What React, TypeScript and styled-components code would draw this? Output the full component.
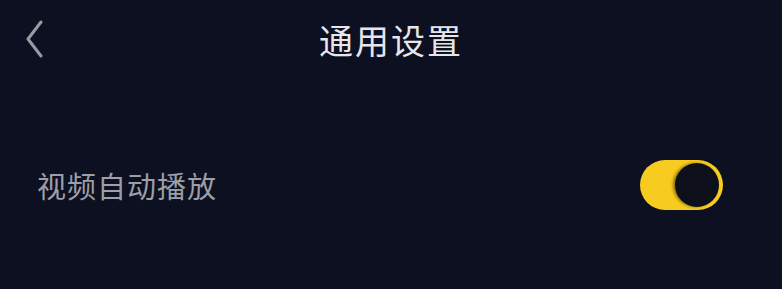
import styled, { createGlobalStyle } from "styled-components";

const GlobalStyle = createGlobalStyle`
  html, body {
    margin: 0;
    padding: 0;
    background: #0d1020;
  }
  body {
    font-family: "Noto Sans CJK SC", "Noto Sans", sans-serif;
  }
`;

const Page = styled.div`
  width: 782px;
  height: 289px;
  background: #0d1020;
  overflow: hidden;
`;

const Header = styled.header`
  display: grid;
  grid-template-columns: 80px 1fr 80px;
  align-items: center;
  height: 78px;
`;

const BackButton = styled.button`
  display: flex;
  align-items: center;
  justify-content: flex-start;
  padding: 0 0 0 24px;
  height: 78px;
  background: none;
  border: none;
  cursor: pointer;
`;

const Title = styled.h1`
  margin: 0;
  text-align: center;
  font-size: 34px;
  font-weight: 400;
  letter-spacing: 2px;
  color: #e6e6ea;
`;

const List = styled.div`
  display: flex;
  flex-direction: column;
  padding-top: 79px;
`;

const Row = styled.div`
  display: flex;
  align-items: center;
  justify-content: space-between;
  padding: 0 59px 0 37px;
  height: 56px;
`;

const Label = styled.span`
  font-size: 29px;
  letter-spacing: 1px;
  color: #9c9ea8;
`;

const Switch = styled.button<{ $on: boolean }>`
  position: relative;
  width: 83px;
  height: 50px;
  padding: 0;
  border: none;
  border-radius: 25px;
  background: ${(p) => (p.$on ? "#f7cb1f" : "#3a3d4a")};
  cursor: pointer;
`;

const Knob = styled.span<{ $on: boolean }>`
  position: absolute;
  top: 3px;
  left: ${(p) => (p.$on ? "35px" : "3px")};
  width: 44px;
  height: 44px;
  border-radius: 50%;
  background: #0d0f1a;
  box-shadow: -2px 0 3px rgba(0, 0, 0, 0.45);
`;

const ChevronLeft = () => (
  <svg width="20" height="38" viewBox="0 0 20 38" fill="none">
    <path
      d="M17 2 L4 19 L17 36"
      stroke="#9a9aa2"
      strokeWidth="3"
      strokeLinecap="round"
      strokeLinejoin="round"
    />
  </svg>
);

const App = () => {
  return (
    <Page>
      <GlobalStyle />
      <Header>
        <BackButton aria-label="返回">
          <ChevronLeft />
        </BackButton>
        <Title>通用设置</Title>
        <div />
      </Header>
      <List>
        <Row>
          <Label>视频自动播放</Label>
          <Switch $on={true} aria-label="视频自动播放">
            <Knob $on={true} />
          </Switch>
        </Row>
      </List>
    </Page>
  );
};

export default App;
